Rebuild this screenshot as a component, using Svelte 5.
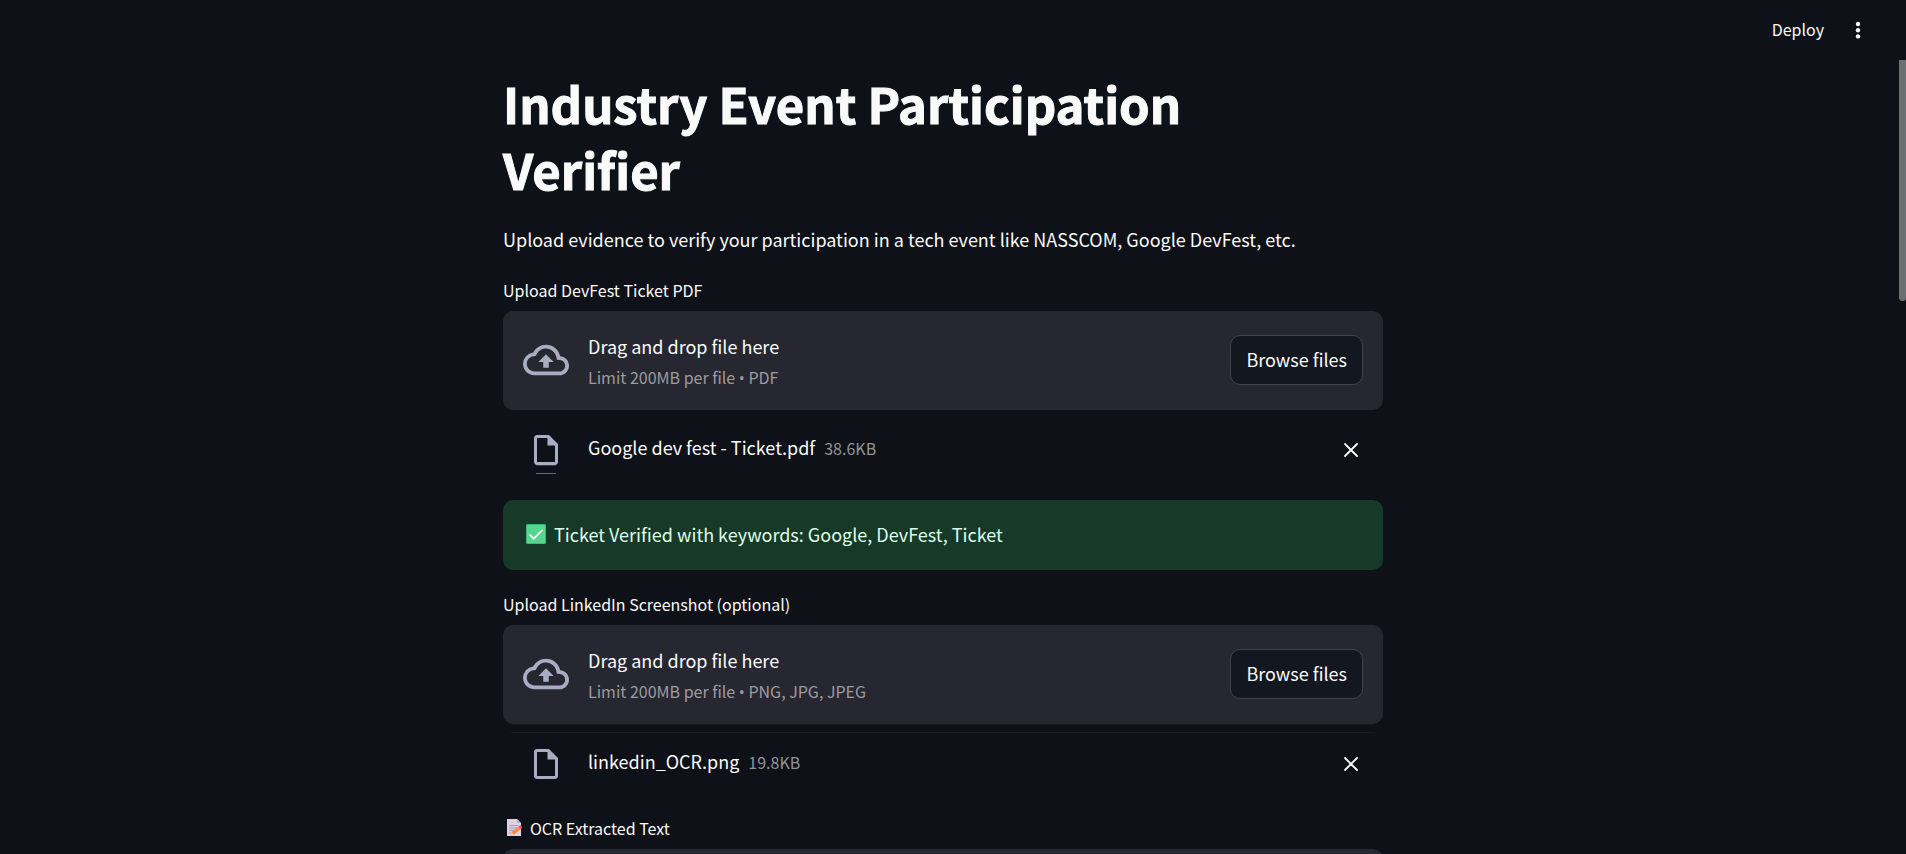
<script>
  const ticket = { name: 'Google dev fest - Ticket.pdf', size: '38.6KB' };
  const linkedin = { name: 'linkedin_OCR.png', size: '19.8KB' };
</script>

{#snippet uploader(id, label, types, file, staleIcon, staleZone)}
  <section class="uploader">
    <label class="field-label" for={id}>{label}</label>
    <div class="dropzone" class:stale={staleZone}>
      <svg class="cloud" viewBox="0 0 24 24" aria-hidden="true">
        <path d="M19.35 10.04A7.49 7.49 0 0 0 12 4C9.11 4 6.6 5.64 5.35 8.04A5.994 5.994 0 0 0 0 14c0 3.31 2.69 6 6 6h13c2.76 0 5-2.24 5-5 0-2.64-2.05-4.78-4.65-4.96zM19 18H6c-2.21 0-4-1.79-4-4 0-2.05 1.53-3.76 3.56-3.97l1.07-.11.5-.95A5.469 5.469 0 0 1 12 6c2.62 0 4.88 1.86 5.39 4.43l.3 1.5 1.53.11A2.98 2.98 0 0 1 22 15c0 1.65-1.35 3-3 3zM8 13h2.55v3h2.9v-3H16l-4-4z" />
      </svg>
      <div class="hint">
        <span class="hint-title">Drag and drop file here</span>
        <span class="hint-limit">Limit 200MB per file <span class="bullet">•</span> {types}</span>
      </div>
      <input class="file-input" type="file" {id} tabindex="-1" />
      <button class="browse" type="button">Browse files</button>
    </div>
    <div class="file">
      <span class="file-icon" class:stale={staleIcon}>
        <svg viewBox="0 0 24 24" aria-hidden="true">
          <path d="M6 2c-1.1 0-1.99.9-1.99 2L4 20c0 1.1.89 2 1.99 2H18c1.1 0 2-.9 2-2V8l-6-6H6zm0 18V4h7v5h5v11H6z" />
        </svg>
      </span>
      <div class="file-text">
        <span class="file-name">{file.name}</span>
        <span class="file-size">{file.size}</span>
      </div>
      <button class="remove" type="button" aria-label="Remove file">
        <svg viewBox="0 0 24 24" aria-hidden="true"><path d="M4 4l16 16M20 4L4 20" /></svg>
      </button>
    </div>
  </section>
{/snippet}

<div class="app">
  <header>
    <button class="deploy" type="button">Deploy</button>
    <button class="menu" type="button" aria-label="Main menu">
      <svg viewBox="0 0 20 20" aria-hidden="true">
        <circle cx="10" cy="4" r="2.2" />
        <circle cx="10" cy="10.2" r="2.2" />
        <circle cx="10" cy="16.4" r="2.2" />
      </svg>
    </button>
  </header>

  <main>
    <div class="column">
      <h1>Industry Event Participation Verifier</h1>
      <p class="intro">Upload evidence to verify your participation in a tech event like NASSCOM, Google DevFest, etc.</p>

      {@render uploader('ticket', 'Upload DevFest Ticket PDF', 'PDF', ticket, true, false)}

      <div class="alert" role="alert">
        <svg class="check" viewBox="0 0 20 20" aria-hidden="true">
          <rect width="20" height="20" rx="1.5" fill="#43b581" />
          <rect x="1" y="1" width="18" height="18" rx="1" fill="#56d68c" />
          <path d="M3.5 10.5l4.2 4.2L16.5 6" fill="none" stroke="#fff" stroke-width="1.7" />
        </svg>
        <span>Ticket Verified with keywords: Google, DevFest, Ticket</span>
      </div>

      {@render uploader('linkedin', 'Upload LinkedIn Screenshot (optional)', 'PNG, JPG, JPEG', linkedin, false, true)}

      <section class="extracted">
        <label class="field-label" for="ocr">
          <svg class="memo" viewBox="0 0 16 18" aria-hidden="true">
            <path d="M0 0h10l4 4v13H0z" fill="#dcd3e2" />
            <path d="M10 0v4h4z" fill="#b9a9c6" />
            <path d="M2 6.5h9M2 9h8M2 11.5h5M2 14h2" stroke="#a89bb5" stroke-width="1" />
            <path d="M3.5 16.5l1-3.5 7-5.5 2.3 2.8-7 5.5z" fill="#ff8a4c" />
            <path d="M11.5 7.5l1-.8q1-.5 1.8.3l.6.8q.5 1-.2 1.7l-.9.8z" fill="#f4475c" />
            <path d="M3.5 16.5l1-3.5 2.3 2.8z" fill="#f9c9a2" />
          </svg>
          OCR Extracted Text
        </label>
        <textarea id="ocr"></textarea>
      </section>
    </div>
  </main>

  <div class="scroll-thumb"></div>
</div>

<style>
  :global(body) {
    background: #0e1117;
  }

  .app {
    height: 100vh;
    overflow: hidden;
    background: #0e1117;
    color: #fafafa;
    font-family: 'Noto Sans CJK SC', 'Noto Sans', sans-serif;
    font-size: 18px;
    line-height: 30px;
  }

  .app * {
    box-sizing: border-box;
  }

  button {
    font: inherit;
    color: inherit;
    background: none;
    border: 0;
    padding: 0;
    cursor: pointer;
  }

  svg {
    display: block;
    flex: none;
  }

  header {
    display: flex;
    align-items: center;
    justify-content: flex-end;
    gap: 24px;
    height: 60px;
    padding-right: 38px;
  }

  .deploy {
    padding-bottom: 2px;
    font-size: 16px;
  }

  .menu svg {
    width: 20px;
    height: 20px;
    fill: #fafafa;
  }

  main {
    display: flex;
    justify-content: center;
    padding: 10px 20px 0 0;
  }

  .column {
    width: 100%;
    max-width: 880px;
  }

  h1 {
    max-width: 840px;
    margin: 0 0 22px;
    font-size: 49px;
    line-height: 66px;
    font-weight: 700;
    -webkit-text-stroke: 1px #fafafa;
  }

  .intro {
    margin: 0 0 24px;
  }

  .field-label {
    display: flex;
    align-items: center;
    margin-bottom: 9px;
    font-size: 16px;
    line-height: 24px;
  }

  .dropzone {
    position: relative;
    display: flex;
    align-items: center;
    gap: 19px;
    padding: 17px 20px 19px;
    background: #262730;
    border-radius: 10px;
  }

  .dropzone.stale::after {
    content: '';
    position: absolute;
    left: 8px;
    right: 8px;
    bottom: -9px;
    height: 7px;
    border-top: 1px solid #12151c;
    border-bottom: 1px solid #1a1c24;
  }

  .cloud {
    width: 46px;
    height: 46px;
    fill: #a9adc1;
  }

  .hint {
    display: flex;
    flex-direction: column;
    flex: 1;
  }

  .hint-title {
    line-height: 36px;
  }

  .hint-limit {
    font-size: 16px;
    line-height: 27px;
    color: #9c9c9f;
  }

  .bullet {
    font-family: 'Open Sans', 'Noto Sans', sans-serif;
    line-height: 16px;
  }

  .file-input {
    position: absolute;
    width: 1px;
    height: 1px;
    opacity: 0;
    pointer-events: none;
  }

  .browse {
    height: 50px;
    padding: 0 15px 2px;
    background: #131720;
    border: 1px solid #41434b;
    border-radius: 10px;
  }

  .file {
    display: flex;
    align-items: center;
    gap: 19px;
    padding: 22px 23px 32px 20px;
  }

  .file-icon {
    position: relative;
    display: flex;
    justify-content: center;
    width: 46px;
  }

  .file-icon svg {
    width: 36px;
    height: 36px;
    fill: #a9adc1;
  }

  .file-icon.stale::after {
    content: '';
    position: absolute;
    left: 13px;
    right: 13px;
    bottom: -6px;
    height: 7px;
    border-top: 1px solid #3a3d47;
    border-bottom: 1px solid #666976;
  }

  .file-text {
    display: flex;
    align-items: baseline;
    gap: 9px;
    flex: 1;
    padding-bottom: 5px;
  }

  .file-size {
    font-size: 16px;
    color: #939496;
  }

  .remove {
    padding-bottom: 1px;
  }

  .remove svg {
    width: 18px;
    height: 18px;
    fill: none;
    stroke: #fafafa;
    stroke-width: 2.4;
    stroke-linecap: round;
  }

  .alert {
    display: flex;
    align-items: center;
    gap: 8px;
    margin-bottom: 22px;
    padding: 19px 23px 21px;
    background: #173928;
    color: #dffde9;
    border-radius: 10px;
  }

  .check {
    width: 20px;
    height: 20px;
  }

  .extracted {
    padding-top: 2px;
  }

  .memo {
    width: 16px;
    height: 18px;
    margin: 0 7px 0 4px;
  }

  textarea {
    display: block;
    width: 100%;
    height: 250px;
    padding: 16px;
    background: #262730;
    color: inherit;
    font: inherit;
    border: 0;
    border-radius: 10px;
    resize: none;
  }

  .scroll-thumb {
    position: fixed;
    top: 60px;
    right: 0;
    width: 7px;
    height: 241px;
    background: #6e6f72;
    border-radius: 0 0 4px 4px;
  }
</style>
